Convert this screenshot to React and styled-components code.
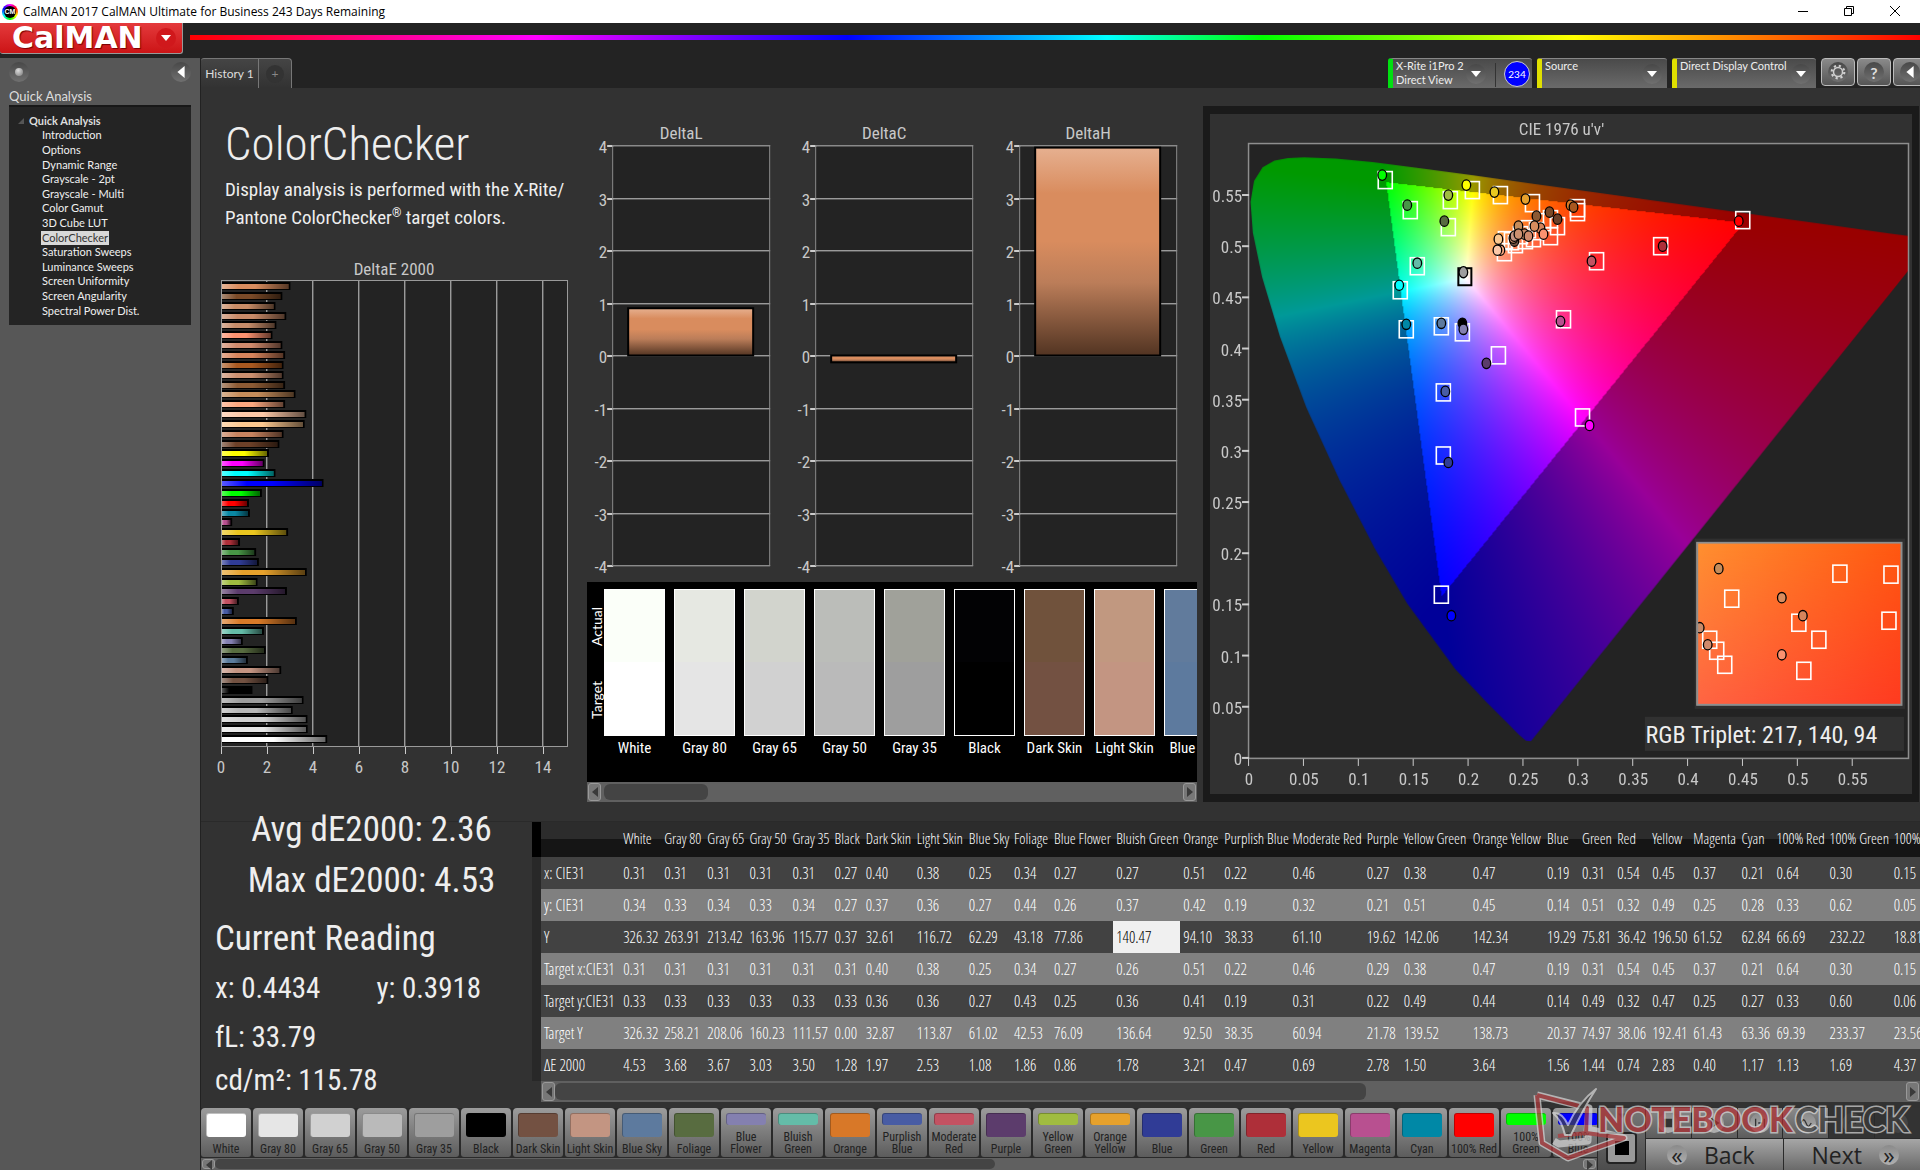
import { useEffect, useRef } from 'react';
import styled, { createGlobalStyle } from 'styled-components';

const narrow = '"Open Sans Condensed Light", "Open Sans Condensed", Lato, sans-serif';
const medium = '"Roboto Condensed", "Open Sans Condensed", Lato, sans-serif';
const ui = 'Lato, "Open Sans", sans-serif';

const pages = [
  'Introduction', 'Options', 'Dynamic Range', 'Grayscale - 2pt', 'Grayscale - Multi', 'Color Gamut',
  '3D Cube LUT', 'ColorChecker', 'Saturation Sweeps', 'Luminance Sweeps', 'Screen Uniformity',
  'Screen Angularity', 'Spectral Power Dist.',
];

// [color, dE2000] from the top of the chart down
const deltaE = [
  ['#d98c5e', 2.93], ['#7a4a28', 2.58], ['#c98c66', 2.28], ['#c88a68', 2.75], ['#c68c6a', 2.32],
  ['#fc9270', 2.15], ['#d08a6c', 2.58], ['#d6845c', 2.7], ['#a85820', 2.63], ['#cc9070', 2.63],
  ['#8c5a34', 2.7], ['#c58c5a', 3.15], ['#fca880', 2.7], ['#fcc8a8', 3.62], ['#fcc890', 3.55],
  ['#c88460', 2.63], ['#6c4028', 2.45], ['#ffff00', 2.0], ['#ff00ff', 1.8], ['#00ffff', 2.28],
  ['#0000ff', 4.37], ['#00ff00', 1.69], ['#ff0000', 1.13], ['#0a88a4', 1.17], ['#b85090', 0.4],
  ['#ebc61f', 2.83], ['#ae2f39', 0.74], ['#489646', 1.44], ['#303c96', 1.56], ['#e6a12c', 3.64],
  ['#a0bc40', 1.5], ['#5c3c6c', 2.78], ['#c35262', 0.69], ['#485ca4', 0.47], ['#d87a28', 3.21],
  ['#64bca8', 1.78], ['#8480b0', 0.86], ['#586c40', 1.86], ['#5c7c9c', 1.08], ['#c49482', 2.53],
  ['#735242', 1.97], ['#000000', 1.28], ['#9c9c9c', 3.5], ['#b8b8b8', 3.03], ['#d0d0d0', 3.67],
  ['#e6e6e6', 3.68], ['#ffffff', 4.53],
];

const swatches = [
  ['White', '#fbfff9', '#ffffff'],
  ['Gray 80', '#e6e8e2', '#e5e5e5'],
  ['Gray 65', '#d2d4cd', '#d1d1d1'],
  ['Gray 50', '#bbbdb9', '#bababa'],
  ['Gray 35', '#a0a19a', '#9e9e9e'],
  ['Black', '#020204', '#000000'],
  ['Dark Skin', '#70523c', '#735142'],
  ['Light Skin', '#c19880', '#c39582'],
  ['Blue Sky', '#617b9c', '#5d7a9e'],
];

const patches = [
  ['White', '#ffffff'], ['Gray 80', '#e6e6e6'], ['Gray 65', '#d1d1d1'], ['Gray 50', '#bababa'],
  ['Gray 35', '#9e9e9e'], ['Black', '#000000'], ['Dark Skin', '#735142'], ['Light Skin', '#c39582'],
  ['Blue Sky', '#5d7a9e'], ['Foliage', '#586c40'], ['Blue Flower', '#8480b0', 1], ['Bluish Green', '#64bca8', 1],
  ['Orange', '#d87828'], ['Purplish Blue', '#485ca4', 1], ['Moderate Red', '#c35262', 1], ['Purple', '#5c3c6c'],
  ['Yellow Green', '#a0bc40', 1], ['Orange Yellow', '#e6a12c', 1], ['Blue', '#303c96'], ['Green', '#489646'],
  ['Red', '#ae2f39'], ['Yellow', '#ebc61f'], ['Magenta', '#b85090'], ['Cyan', '#0088a6'],
  ['100% Red', '#ff0000'], ['100% Green', '#00ff00', 1], ['100% Blue', '#0000ff', 1],
];

// [name, column width, x, y, Y, target x, target y, target Y, dE]
const columns = [
  ['White', 41, '0.31', '0.34', '326.32', '0.31', '0.33', '326.32', '4.53'],
  ['Gray 80', 43, '0.31', '0.33', '263.91', '0.31', '0.33', '258.21', '3.68'],
  ['Gray 65', 42, '0.31', '0.34', '213.42', '0.31', '0.33', '208.06', '3.67'],
  ['Gray 50', 43, '0.31', '0.33', '163.96', '0.31', '0.33', '160.23', '3.03'],
  ['Gray 35', 42, '0.31', '0.34', '115.77', '0.31', '0.33', '111.57', '3.50'],
  ['Black', 31, '0.27', '0.27', '0.37', '0.31', '0.33', '0.00', '1.28'],
  ['Dark Skin', 51, '0.40', '0.37', '32.61', '0.40', '0.36', '32.87', '1.97'],
  ['Light Skin', 52, '0.38', '0.36', '116.72', '0.38', '0.36', '113.87', '2.53'],
  ['Blue Sky', 45, '0.25', '0.27', '62.29', '0.25', '0.27', '61.02', '1.08'],
  ['Foliage', 40, '0.34', '0.44', '43.18', '0.34', '0.43', '42.53', '1.86'],
  ['Blue Flower', 62, '0.27', '0.26', '77.86', '0.27', '0.25', '76.09', '0.86'],
  ['Bluish Green', 67, '0.27', '0.37', '140.47', '0.26', '0.36', '136.64', '1.78'],
  ['Orange', 41, '0.51', '0.42', '94.10', '0.51', '0.41', '92.50', '3.21'],
  ['Purplish Blue', 68, '0.22', '0.19', '38.33', '0.22', '0.19', '38.35', '0.47'],
  ['Moderate Red', 74, '0.46', '0.32', '61.10', '0.46', '0.31', '60.94', '0.69'],
  ['Purple', 37, '0.27', '0.21', '19.62', '0.29', '0.22', '21.78', '2.78'],
  ['Yellow Green', 69, '0.38', '0.51', '142.06', '0.38', '0.49', '139.52', '1.50'],
  ['Orange Yellow', 74, '0.47', '0.45', '142.34', '0.47', '0.44', '138.73', '3.64'],
  ['Blue', 35, '0.19', '0.14', '19.29', '0.19', '0.14', '20.37', '1.56'],
  ['Green', 35, '0.31', '0.51', '75.81', '0.31', '0.49', '74.97', '1.44'],
  ['Red', 35, '0.54', '0.32', '36.42', '0.54', '0.32', '38.06', '0.74'],
  ['Yellow', 41, '0.45', '0.49', '196.50', '0.45', '0.47', '192.41', '2.83'],
  ['Magenta', 48, '0.37', '0.25', '61.52', '0.37', '0.25', '61.43', '0.40'],
  ['Cyan', 35, '0.21', '0.28', '62.84', '0.21', '0.27', '63.36', '1.17'],
  ['100% Red', 53, '0.64', '0.33', '66.69', '0.64', '0.33', '69.39', '1.13'],
  ['100% Green', 64, '0.30', '0.62', '232.22', '0.30', '0.60', '233.37', '1.69'],
  ['100% Blue', 60, '0.15', '0.05', '18.81', '0.15', '0.06', '23.56', '4.37'],
];
const rowNames = ['x: CIE31', 'y: CIE31', 'Y', 'Target x:CIE31', 'Target y:CIE31', 'Target Y', 'ΔE 2000'];

// CIE 1976 spectral locus, u'v'
const locus = [
  [0.2568, 0.0165], [0.2522, 0.0169], [0.2461, 0.0226], [0.2347, 0.035], [0.2161, 0.0549], [0.1877, 0.0871],
  [0.1441, 0.151], [0.1147, 0.2044], [0.0828, 0.2708], [0.0521, 0.3427], [0.0282, 0.4117], [0.0119, 0.4698],
  [0.0035, 0.5131], [0.0014, 0.5432], [0.0046, 0.5638], [0.0123, 0.577], [0.0231, 0.5837], [0.0355, 0.5862],
  [0.0501, 0.5868], [0.0792, 0.5856], [0.1127, 0.5821], [0.1531, 0.5766], [0.2026, 0.5694], [0.2623, 0.5604],
  [0.3315, 0.5501], [0.4035, 0.5393], [0.5203, 0.5219], [0.583, 0.5125], [0.6234, 0.5065],
];

const CIE = { w: 701, h: 680, left: 39, top: 30, right: 697, bottom: 643, ux: 1096, vy: 1022 };
const px = (u) => CIE.left + u * CIE.ux;
const py = (v) => CIE.bottom - v * CIE.vy;

const targets = [
  [175, 66], [200, 96], [240, 86], [262, 76], [290, 81], [322, 89], [367, 94], [367, 98], [238, 113], [207, 152],
  [190, 176], [196, 215], [231, 212], [252, 218], [288, 241], [233, 278], [233, 341], [372, 303], [353, 205],
  [386, 147], [450, 132], [532, 106], [231, 480], [347, 112], [340, 122], [295, 126], [294, 138], [305, 130],
  [315, 126], [323, 124], [318, 115], [340, 105], [333, 108], [326, 117], [310, 121], [301, 127],
];

const readings = [
  [172, 61, '#00ff00'], [197, 91, '#489646'], [238, 81, '#a0bc40'], [256, 71, '#ffff00'], [284, 78, '#e8c820'],
  [315, 85, '#e6a12c'], [360, 91, '#d87a28'], [363, 93, '#a85820'], [234, 107, '#586c40'], [207, 149, '#64bca8'],
  [189, 171, '#00ffff'], [196, 210, '#0088a6'], [231, 209, '#5d7a9e'], [252, 209, '#000000'], [253, 215, '#8480b0'],
  [276, 249, '#5c3c6c'], [235, 277, '#485ca4'], [238, 348, '#303c96'], [379, 311, '#ff00ff'], [350, 207, '#b85090'],
  [381, 147, '#c35262'], [452, 132, '#ae2f39'], [528, 107, '#ff0000'], [241, 501, '#0000ff'], [326, 102, '#8c5a34'],
  [339, 98, '#7a4a28'], [347, 105, '#6c4028'], [308, 112, '#c58c5a'], [330, 114, '#d6845c'], [324, 112, '#d98c5e'],
  [333, 120, '#fc9270'], [314, 120, '#c88a68'], [318, 122, '#d08a6c'], [304, 127, '#735242'], [303, 124, '#c68c6a'],
  [304, 122, '#c49482'], [308, 120, '#cc9070'], [288, 125, '#fcc890'], [290, 136, '#fca880'], [287, 136, '#fcc8a8'],
];

const insetTargets = [
  [629, 459], [680, 460], [521, 484], [678, 506], [588, 508], [608, 525], [499, 525], [506, 536], [514, 550], [593, 556],
];
const insetReadings = [
  [508, 454, '#c58c5a'], [571, 483, '#d98c5e'], [592, 501, '#d6845c'], [489, 513, '#c88a68'], [497, 530, '#d08a6c'],
  [571, 540, '#fc9270'],
];

function paintGamut(canvas) {
  const ctx = canvas.getContext('2d');
  const { w, h } = CIE;
  const layer = document.createElement('canvas');
  layer.width = w;
  layer.height = h;
  const lctx = layer.getContext('2d');
  const image = lctx.createImageData(w, h);
  for (let j = 0; j < h; j += 1) {
    for (let i = 0; i < w; i += 1) {
      const u = (i + 0.5 - CIE.left) / CIE.ux;
      const v = Math.max((CIE.bottom - j - 0.5) / CIE.vy, 0.004);
      const X = (9 * u) / (4 * v);
      const Z = (12 - 3 * u - 20 * v) / (4 * v);
      const rgb = [
        3.2406 * X - 1.5372 - 0.4986 * Z,
        -0.9689 * X + 1.8758 + 0.0415 * Z,
        0.0557 * X - 0.204 + 1.057 * Z,
      ];
      const max = Math.max(...rgb);
      const dim = Math.min(...rgb) < 0 ? 0.6 : 1;
      const at = (j * w + i) * 4;
      for (let k = 0; k < 3; k += 1) {
        image.data[at + k] = 255 * dim * (Math.max(rgb[k], 0) / max);
      }
      image.data[at + 3] = 255;
    }
  }
  lctx.putImageData(image, 0, 0);
  ctx.clearRect(0, 0, w, h);
  ctx.save();
  ctx.beginPath();
  ctx.rect(CIE.left, CIE.top, CIE.right - CIE.left, CIE.bottom - CIE.top);
  ctx.clip();
  ctx.beginPath();
  locus.forEach(([u, v]) => ctx.lineTo(px(u), py(v)));
  ctx.closePath();
  ctx.clip();
  ctx.drawImage(layer, 0, 0);
  ctx.restore();
}

const Tri = ({ dir = 'down', size = 10, color = '#fff' }) => {
  const d = { down: 'M0 2h10L5 8z', left: 'M8 0v10L2 5z', right: 'M2 0v10l6-5z' }[dir];
  return (
    <svg width={size} height={size} viewBox="0 0 10 10" aria-hidden="true">
      <path d={d} fill={color} />
    </svg>
  );
};

const Scroll = ({ size, start, span, gap = 2 }) => (
  <ScrollTrack $size={size}>
    <ScrollArrow aria-label="Scroll left"><Tri dir="left" color="#3a3a3a" /></ScrollArrow>
    <ScrollLane>
      <ScrollThumb $gap={gap} style={{ marginLeft: start, width: span }} />
    </ScrollLane>
    <ScrollArrow aria-label="Scroll right"><Tri dir="right" color="#3a3a3a" /></ScrollArrow>
  </ScrollTrack>
);

const DeltaEChart = () => (
  <ChartSvg viewBox="0 0 386 530" role="img" aria-label="DeltaE 2000">
    <defs>
      <linearGradient id="shadeX" x1="0" x2="1" y1="0" y2="0">
        <stop offset="0" stopColor="#fff" stopOpacity=".35" />
        <stop offset=".25" stopColor="#fff" stopOpacity="0" />
        <stop offset=".5" stopColor="#000" stopOpacity="0" />
        <stop offset="1" stopColor="#000" stopOpacity=".6" />
      </linearGradient>
    </defs>
    <text x="193" y="19" textAnchor="middle">DeltaE 2000</text>
    <rect x="20.5" y="24.5" width="346" height="466" fill="#232323" />
    {[2, 4, 6, 8, 10, 12, 14].map((t) => (
      <g key={t}>
        <rect x={19 + t * 23} y="25" width="1" height="465" fill="#9a9a9a" />
        <rect x={20 + t * 23} y="25" width="1" height="465" fill="#555" />
      </g>
    ))}
    {deltaE.map(([color, value], i) => {
      const y = 26 + Math.round(i * 9.85);
      return (
        <g key={i}>
          <rect x="21" y={y} width={value * 23 + 1} height="8" fill="#000" />
          <rect x="21" y={y + 2} width={value * 23 - 1} height="5" fill={color} />
          <rect x="21" y={y + 2} width={value * 23 - 1} height="5" fill="url(#shadeX)" />
        </g>
      );
    })}
    <rect x="20.5" y="24.5" width="346" height="466" fill="none" stroke="#9a9a9a" />
    {[0, 2, 4, 6, 8, 10, 12, 14].map((t) => (
      <g key={t}>
        <rect x={20 + t * 23} y="491" width="1" height="7" fill="#ccc" />
        <text x={20 + t * 23} y="517" textAnchor="middle">{t}</text>
      </g>
    ))}
  </ChartSvg>
);

const DeltaChart = ({ title, value }) => {
  const zero = 244;
  const h = Math.abs(value) * 52.5;
  const top = value > 0 ? zero - h : zero;
  return (
    <DeltaSvg viewBox="0 0 203 470" role="img" aria-label={title}>
      <defs>
        <linearGradient id="copper" x1="0" x2="0" y1="0" y2="1">
          <stop offset="0" stopColor="#e6b090" />
          <stop offset=".22" stopColor="#d98c5e" />
          <stop offset=".45" stopColor="#d98c5e" />
          <stop offset=".65" stopColor="#bb7d59" />
          <stop offset="1" stopColor="#523422" />
        </linearGradient>
      </defs>
      <text x="94" y="27" textAnchor="middle">{title}</text>
      <rect x="25.5" y="33.5" width="157" height="420" fill="#232323" />
      {[4, 3, 2, 1, 0, -1, -2, -3, -4].map((t) => {
        const y = Math.round(zero - t * 52.5);
        return (
          <g key={t}>
            <rect x="25" y={y - 1} width="158" height="1" fill="#9a9a9a" />
            <rect x="25" y={y} width="158" height="1" fill="#555" />
            <rect x="20" y={y - 1} width="6" height="2" fill="#ccc" />
            <text x="20" y={y + 7} textAnchor="end">{t}</text>
          </g>
        );
      })}
      <rect x="25.5" y="33.5" width="157" height="420" fill="none" stroke="#8a8a8a" />
      <rect x="41" y={top - 0.5} width="125" height={h} fill="url(#copper)" stroke="#000" strokeWidth="2" />
    </DeltaSvg>
  );
};

const Marks = ({ squares, dots }) => (
  <>
    {squares.map(([x, y], i) => (
      <rect key={i} x={x - 7} y={y - 8.5} width="14" height="17" fill="none" stroke="#fff" strokeWidth="1.6" />
    ))}
    {dots.map(([x, y, c], i) => (
      <ellipse key={i} cx={x} cy={y} rx="4.3" ry="5.2" fill={c} stroke="#000" strokeWidth="1.3" />
    ))}
  </>
);

const CieChart = () => {
  const canvas = useRef(null);
  useEffect(() => paintGamut(canvas.current), []);
  const ticks = [0, 0.05, 0.1, 0.15, 0.2, 0.25, 0.3, 0.35, 0.4, 0.45, 0.5, 0.55];
  return (
    <CieStack>
      <canvas ref={canvas} width={CIE.w} height={CIE.h} />
      <svg viewBox={`0 0 ${CIE.w} ${CIE.h}`} role="img" aria-label="CIE 1976 u'v'">
        <defs>
          <linearGradient id="zoomTop" x1="0" x2="1" y1="0" y2="0">
            <stop offset="0" stopColor="#ff9030" />
            <stop offset="1" stopColor="#ff5810" />
          </linearGradient>
          <linearGradient id="zoomBottom" x1="0" x2="1" y1="0" y2="0">
            <stop offset="0" stopColor="#ff6444" />
            <stop offset="1" stopColor="#ff3a20" />
          </linearGradient>
          <linearGradient id="fadeDown" x1="0" x2="0" y1="0" y2="1">
            <stop offset="0" stopColor="#000" />
            <stop offset="1" stopColor="#fff" />
          </linearGradient>
          <mask id="lower"><rect x="486" y="429" width="205" height="163" fill="url(#fadeDown)" /></mask>
          <clipPath id="zoomClip"><rect x="486" y="429" width="204" height="161" /></clipPath>
        </defs>
        <text x="351" y="21" textAnchor="middle">CIE 1976 u'v'</text>
        <rect x="38.5" y="29.5" width="659" height="614" fill="none" stroke="#8e8e8e" strokeWidth="1.5" />
        {ticks.map((t) => (
          <g key={t}>
            <rect x="32" y={py(t) - 1} width="7" height="2" fill="#ccc" />
            <text x="32" y={py(t) + 7} textAnchor="end">{t}</text>
            <rect x={px(t) - 1} y="644" width="1" height="7" fill="#ccc" />
            <text x={px(t)} y="670" textAnchor="middle">{t}</text>
          </g>
        ))}
        <Marks squares={targets} dots={readings} />
        <rect x="248" y="154" width="13" height="17" fill="none" stroke="#000" strokeWidth="2" />
        <ellipse cx="253" cy="158" rx="4.3" ry="5.5" fill="#9e9e9e" stroke="#000" strokeWidth="1.3" />
        <rect x="484" y="424" width="210" height="170" fill="#2f2f2f" />
        <rect x="486" y="428" width="204" height="162" fill="url(#zoomTop)" />
        <rect x="486" y="428" width="204" height="162" fill="url(#zoomBottom)" mask="url(#lower)" />
        <g clipPath="url(#zoomClip)">
          <Marks squares={insetTargets} dots={insetReadings} />
        </g>
        <rect x="486.5" y="428" width="204" height="162" fill="none" stroke="#8e8e8e" strokeWidth="2" />
        <rect x="434" y="602" width="259" height="34" fill="#313131" />
        <Triplet x="435" y="628">RGB Triplet: 217, 140, 94</Triplet>
      </svg>
    </CieStack>
  );
};

const Watermark = () => (
  <WatermarkSvg viewBox="0 0 390 76" role="img" aria-label="NOTEBOOKCHECK">
    <g strokeLinejoin="round" fill="none">
      <path d="M7 9l52 13-1 33-29 3-5-3M7 9l5 48 26 15 56-20-36-9M59 22l-2 24" stroke="#d8d8d8" strokeWidth="7" />
      <path d="M7 9l50 13-1 26M7 9l5 48 26 15 56-20-38-5-28 3" stroke="#b33a3d" strokeWidth="4" />
      <path d="M23 27c7-1 12 5 15 12C45 24 54 12 66 3 56 18 48 34 41 49h-6c-2-9-6-17-12-22z" fill="#444" stroke="#d8d8d8" strokeWidth="2" />
    </g>
    <WatermarkText x="68" y="46" $color="#b02c30" $weight="900">NOTEBOOK</WatermarkText>
    <WatermarkText x="265" y="46" $color="#3a3a3a" $weight="700">CHECK</WatermarkText>
  </WatermarkSvg>
);

const App = () => {
  return (
    <>
      <GlobalStyle />
      <Window>
        <TitleBar>
          <AppIcon><span>CM</span></AppIcon>
          <WindowTitle>CalMAN 2017 CalMAN Ultimate for Business 243 Days Remaining</WindowTitle>
          <WindowButton aria-label="Minimize">
            <svg width="10" height="10" viewBox="0 0 10 10"><path d="M0 5.5h10" /></svg>
          </WindowButton>
          <WindowButton aria-label="Restore">
            <svg width="10" height="10" viewBox="0 0 10 10"><path d="M.5 2.5h7v7h-7zM2.5 2.5v-2h7v7h-2" /></svg>
          </WindowButton>
          <WindowButton aria-label="Close">
            <svg width="10" height="10" viewBox="0 0 10 10"><path d="M0 0l10 10M10 0L0 10" /></svg>
          </WindowButton>
        </TitleBar>
        <Header>
          <Brand>
            <BrandName>CalMAN</BrandName>
            <BrandArrow><Tri /></BrandArrow>
          </Brand>
          <Rainbow />
        </Header>
        <Body>
          <Sidebar>
            <SidebarTop>
              <Knob aria-label="Pin"><Dot /></Knob>
              <Knob aria-label="Collapse"><Tri dir="left" size={12} /></Knob>
            </SidebarTop>
            <SidebarTitle>Quick Analysis</SidebarTitle>
            <Tree>
              <TreeRoot><svg width="6" height="6" viewBox="0 0 6 6"><path d="M6 0v6H0z" fill="#555" /></svg>Quick Analysis</TreeRoot>
              <TreeList>
                {pages.map((page) => (
                  <TreeItem key={page}><TreeLink href="#" $active={page === 'ColorChecker'}>{page}</TreeLink></TreeItem>
                ))}
              </TreeList>
            </Tree>
          </Sidebar>
          <Workspace>
            <TabRow>
              <Tab>History 1</Tab>
              <AddTab aria-label="Add tab"><span>+</span></AddTab>
              <Spacer />
              <Device $color="#00e010" $width="144px">
                <DeviceName>X-Rite i1Pro 2<br />Direct View</DeviceName>
                <Knob as="span"><Tri /></Knob>
                <Divider />
                <Counter>234</Counter>
              </Device>
              <Device $color="#e0e000" $width="130px">
                <DeviceName>Source</DeviceName>
                <Knob as="span"><Tri /></Knob>
              </Device>
              <Device $color="#e0e000" $width="144px">
                <DeviceName>Direct Display Control</DeviceName>
                <Knob as="span"><Tri /></Knob>
              </Device>
              <Tool aria-label="Settings">
                <Knob as="span">
                  <svg width="16" height="16" viewBox="0 0 16 16" fill="none" stroke="#d0d0d0">
                    <circle cx="8" cy="8" r="4.5" strokeWidth="1.5" />
                    <circle cx="8" cy="8" r="6.3" strokeWidth="2.2" strokeDasharray="2.2 2.75" />
                  </svg>
                </Knob>
              </Tool>
              <Tool aria-label="Help"><Knob as="span">?</Knob></Tool>
              <Tool aria-label="Hide"><Knob as="span"><Tri dir="left" size={12} /></Knob></Tool>
            </TabRow>
            <Stage>
              <LeftColumn>
                <Intro>
                  <h1>ColorChecker</h1>
                  <p>Display analysis is performed with the X-Rite/<br />Pantone ColorChecker<sup>®</sup> target colors.</p>
                </Intro>
                <DeltaEChart />
              </LeftColumn>
              <MiddleColumn>
                <DeltaRow>
                  <DeltaChart title="DeltaL" value={0.9} />
                  <DeltaChart title="DeltaC" value={-0.13} />
                  <DeltaChart title="DeltaH" value={3.96} />
                </DeltaRow>
                <SwatchPanel>
                  <SideLabels>
                    <span>Actual</span>
                    <span>Target</span>
                  </SideLabels>
                  {swatches.map(([name, actual, target]) => (
                    <Swatch key={name}>
                      <SwatchColor $actual={actual} $target={target} />
                      <SwatchName>{name}</SwatchName>
                    </Swatch>
                  ))}
                </SwatchPanel>
                <Scroll size={20} start="3px" span="104px" />
              </MiddleColumn>
              <CiePanel>
                <CieChart />
              </CiePanel>
            </Stage>
            <Lower>
              <Stats>
                <Average>Avg dE2000: 2.36</Average>
                <Average>Max dE2000: 4.53</Average>
                <Reading>Current Reading</Reading>
                <Values><span>x: 0.4434</span><span>y: 0.3918</span></Values>
                <Values>fL: 33.79</Values>
                <Values $tight>cd/m²: 115.78</Values>
              </Stats>
              <TableArea>
                <TableClip>
                  <Table>
                    <colgroup>
                      <col width="9" />
                      <col width="79" />
                      {columns.map(([name, width]) => <col key={name} width={width} />)}
                    </colgroup>
                    <thead>
                      <tr>
                        <Grip as="th" $head />
                        <th />
                        {columns.map(([name]) => <th key={name} scope="col">{name}</th>)}
                      </tr>
                    </thead>
                    <tbody>
                      {rowNames.map((row, r) => (
                        <tr key={row}>
                          <Grip />
                          <th scope="row">{row}</th>
                          {columns.map((c) => (
                            <Cell key={c[0]} $active={r === 2 && c[0] === 'Bluish Green'}>{c[r + 2]}</Cell>
                          ))}
                        </tr>
                      ))}
                    </tbody>
                  </Table>
                </TableClip>
                <TableScroll><Scroll size={21} start="0" span="60%" gap={2} /></TableScroll>
              </TableArea>
            </Lower>
            <BottomBar>
              <PatchArea>
                <PatchRow>
                  {patches.map(([name, color, tall]) => (
                    <Patch key={name}>
                      <PatchColor $color={color} $short={tall} />
                      <PatchName $tall={tall}>{name}</PatchName>
                    </Patch>
                  ))}
                </PatchRow>
                <Scroll size={12} start="0" span="57%" gap={1} />
              </PatchArea>
              <StopArea>
                <StopTop><Tri dir="down" size={8} color="#555" /></StopTop>
                <StopButton aria-label="Stop"><StopSquare /></StopButton>
              </StopArea>
              <NavArea>
                <Transport>
                  {['M4 4h8v8H4z', 'M5 3l8 5-8 5z', 'M3 3v10M13 3v10M6 8h4', 'M2 8c3-5 4-5 6 0s3 5 6 0', 'M4 9c1-6 7-6 8 0M12 9v-4', 'M8 3v10'].map((d, i) => (
                    <TransportButton key={d} aria-label={`Transport ${i + 1}`} $off={i > 3}>
                      <Disc $off={i > 3}>
                        <svg width="14" height="14" viewBox="0 0 16 16"><path d={d} fill={i < 2 ? '#333' : 'none'} stroke="#333" strokeWidth="1.5" /></svg>
                      </Disc>
                    </TransportButton>
                  ))}
                </Transport>
                <NavButtons>
                  <NavButton><Disc>«</Disc>Back</NavButton>
                  <NavButton $next>Next<Disc>»</Disc></NavButton>
                </NavButtons>
              </NavArea>
            </BottomBar>
          </Workspace>
        </Body>
        <Watermark />
      </Window>
    </>
  );
};

export default App;

const GlobalStyle = createGlobalStyle`
  * {
    box-sizing: border-box;
  }
  body {
    margin: 0;
    background: #323232;
    color: #ddd;
    font-family: ${ui};
    font-size: 12px;
    overflow: hidden;
  }
  button {
    font: inherit;
    color: inherit;
    border: 0;
    padding: 0;
    background: none;
  }
  svg text {
    font: 17px ${medium};
    fill: #c8c8c8;
  }
`;

const Window = styled.div`
  display: flex;
  flex-direction: column;
  min-height: 100vh;
  position: relative;
`;

const TitleBar = styled.div`
  display: flex;
  align-items: center;
  height: 23px;
  padding: 0 2px;
  background: #fff;
  color: #000;
`;

const AppIcon = styled.div`
  width: 16px;
  height: 16px;
  display: grid;
  place-items: center;
  border-radius: 50%;
  background: conic-gradient(#f0f, #f00, #ff0, #0f0, #0ff, #00f, #f0f);
  span {
    width: 12px;
    height: 12px;
    border-radius: 50%;
    background: #000;
    color: #fff;
    font: bold 7px/12px "Liberation Sans", sans-serif;
    text-align: center;
  }
`;

const WindowTitle = styled.span`
  flex: 1;
  margin-left: 5px;
  font: 12px "Open Sans", sans-serif;
`;

const WindowButton = styled.button`
  width: 46px;
  height: 20px;
  svg {
    fill: none;
    stroke: #000;
  }
`;

const Header = styled.header`
  display: flex;
  align-items: flex-start;
  height: 35px;
  background: #232323;
`;

const Brand = styled.button`
  display: flex;
  align-items: center;
  justify-content: space-between;
  width: 183px;
  height: 31px;
  padding: 0 6px 0 12px;
  background: linear-gradient(#e43a3c, #cc1416);
  border: solid #999;
  border-width: 0 1px 1px 0;
  border-radius: 0 0 3px 3px;
`;

const BrandName = styled.span`
  color: #fff;
  font: bold 30px/30px "DejaVu Sans", sans-serif;
  text-shadow: 1px 1px 1px #700;
`;

const BrandArrow = styled.span`
  display: grid;
  place-items: center;
  width: 20px;
  height: 20px;
  border-radius: 50%;
  background: #d0181c;
`;

const Rainbow = styled.div`
  flex: 1;
  height: 5px;
  margin: 12px 0 0 7px;
  background: linear-gradient(to right, #f00, #f0f 20%, #00f 38%, #0ff 53%, #0f0 62%, #ff0 80%, #f00);
`;

const Body = styled.div`
  display: flex;
  flex: 1;
`;

const Sidebar = styled.aside`
  width: 200px;
  padding: 0 9px;
  background: #575757;
`;

const SidebarTop = styled.div`
  display: flex;
  justify-content: space-between;
  padding-top: 4px;
`;

const Knob = styled.button`
  display: grid;
  place-items: center;
  flex: none;
  width: 20px;
  height: 20px;
  border-radius: 50%;
  background: linear-gradient(#484848, #707070);
`;

const Dot = styled.i`
  width: 8px;
  height: 8px;
  border-radius: 50%;
  background: radial-gradient(at 40% 30%, #ddd, #777);
`;

const SidebarTitle = styled.div`
  margin-top: 5px;
  font-size: 13px;
  line-height: 18px;
`;

const Tree = styled.nav`
  padding: 6px 0 7px;
  background: #242424;
  border-top: 2px solid #181818;
`;

const TreeRoot = styled.div`
  display: flex;
  align-items: center;
  gap: 5px;
  padding-left: 9px;
  line-height: 15px;
  font-weight: bold;
  font-size: 11px;
`;

const TreeList = styled.ul`
  display: grid;
  grid-auto-rows: 1fr;
  height: 190px;
  margin: 0;
  padding: 0 0 0 32px;
  list-style: none;
`;

const TreeItem = styled.li`
  display: flex;
  align-items: center;
`;

const TreeLink = styled.a`
  padding: 0 1px;
  font-size: 11px;
  line-height: 14px;
  text-decoration: none;
  color: ${({ $active }) => ($active ? '#333' : '#f0f0f0')};
  background: ${({ $active }) => ($active ? '#d8d8d8' : 'none')};
`;

const Workspace = styled.main`
  display: flex;
  flex: 1;
  flex-direction: column;
  min-width: 0;
  border-left: 1px solid #222;
`;

const TabRow = styled.div`
  display: flex;
  align-items: flex-start;
  height: 30px;
  background: #232323;
  overflow: hidden;
`;

const Tab = styled.button`
  height: 30px;
  width: 58px;
  background: linear-gradient(#454545, #323232);
  border: solid #777;
  border-width: 1px 1px 0 0;
  border-radius: 3px 0 0 0;
`;

const AddTab = styled(Tab)`
  width: 33px;
  border-radius: 0 4px 0 0;
  color: #888;
  span {
    display: block;
    width: 18px;
    height: 18px;
    margin: auto;
    border-radius: 50%;
    line-height: 18px;
    background: #333;
  }
`;

const Spacer = styled.div`
  flex: 1;
`;

const Device = styled.button`
  display: flex;
  align-items: flex-start;
  width: ${({ $width }) => $width};
  height: 30px;
  margin-right: 5px;
  padding: 4px 5px 0 3px;
  border-left: 5px solid ${({ $color }) => $color};
  border-top: 1px solid #888;
  border-radius: 3px 3px 0 0;
  background: linear-gradient(#4a4a4a, #6a6a6a);
  ${Knob} {
    margin-top: 1px;
  }
`;

const DeviceName = styled.span`
  flex: 1;
  margin-top: -4px;
  font-size: 11px;
  line-height: 14px;
  white-space: nowrap;
  text-align: left;
  color: #eee;
`;

const Divider = styled.i`
  width: 1px;
  height: 24px;
  margin: 0 8px 0 9px;
  background: #333;
`;

const Counter = styled.span`
  width: 26px;
  height: 26px;
  margin: -2px -3px 0 0;
  border: 1px solid #ccc;
  border-radius: 50%;
  background: #00f;
  color: #fff;
  font-size: 10px;
  line-height: 24px;
`;

const Tool = styled.button`
  display: grid;
  place-items: center;
  flex: none;
  width: 34px;
  height: 28px;
  margin: 0 2px 0 0;
  border: 1px solid #bbb;
  border-radius: 4px;
  background: linear-gradient(#8a8a8a, #555);
  color: #ddd;
  font-weight: bold;
  font-size: 16px;
  &:last-child {
    margin-right: -7px;
  }
`;

const Stage = styled.section`
  display: grid;
  grid-template-columns: 386fr 610fr 722fr;
  height: 733px;
  padding-right: 1px;
  background: #323232;
`;

const LeftColumn = styled.div`
  min-width: 0;
`;

const Intro = styled.div`
  height: 168px;
  padding: 28px 0 0 24px;
  color: #eee;
  white-space: nowrap;
  h1 {
    margin: 0;
    font: 300 47px/56px ${medium};
  }
  p {
    margin: 4px 0 0;
    font: 19px/28px ${medium};
  }
  sup {
    font-size: 12px;
    line-height: 0;
  }
`;

const ChartSvg = styled.svg`
  display: block;
  width: 100%;
`;

const MiddleColumn = styled.div`
  min-width: 0;
  padding-top: 24px;
`;

const DeltaRow = styled.div`
  display: grid;
  grid-template-columns: repeat(3, 1fr);
  height: 470px;
`;

const DeltaSvg = styled.svg`
  display: block;
  width: 100%;
  height: 470px;
`;

const SwatchPanel = styled.div`
  display: flex;
  gap: 9px;
  height: 200px;
  padding: 7px 0 0 2px;
  background: #000;
  overflow: hidden;
`;

const SideLabels = styled.div`
  display: grid;
  grid-template-rows: 1fr 1fr;
  width: 15px;
  height: 148px;
  margin-right: -9px;
  flex: none;
  span {
    writing-mode: vertical-rl;
    transform: rotate(180deg);
    text-align: center;
    font-size: 14px;
    line-height: 15px;
    color: #fff;
  }
`;

const Swatch = styled.div`
  flex: none;
  width: 61px;
`;

const SwatchColor = styled.div`
  height: 147px;
  border: 1px solid #fff;
  background: linear-gradient(${({ $actual, $target }) => `${$actual} 50%, ${$target} 50%`});
`;

const SwatchName = styled.div`
  margin: 3px -4px 0;
  text-align: center;
  color: #fff;
  font: 15px/18px ${medium};
`;

const ScrollTrack = styled.div`
  display: flex;
  align-items: stretch;
  height: ${({ $size }) => $size}px;
  padding: 1px;
  background: #606060;
`;

const ScrollArrow = styled.button`
  display: grid;
  place-items: center;
  flex: none;
  width: 13px;
  border: 1px solid #999;
  border-radius: 3px;
  background: #777;
`;

const ScrollLane = styled.div`
  flex: 1;
  display: flex;
`;

const ScrollThumb = styled.div`
  margin: ${({ $gap }) => $gap - 1}px 3px;
  border-radius: 6px;
  background: #444;
`;

const CiePanel = styled.div`
  height: 696px;
  margin: 18px 0 0 6px;
  padding: 8px 7px;
  background: #1a1a1a;
`;

const CieStack = styled.div`
  display: grid;
  height: 100%;
  background: linear-gradient(#232323, #232323) 39px 30px / calc(100% - 43px) calc(100% - 67px) no-repeat #313131;
  canvas,
  svg {
    grid-area: 1 / 1;
    display: block;
    width: 100%;
    height: 100%;
  }
`;

const Triplet = styled.text`
  && {
    font-size: 24px;
    fill: #eee;
  }
`;

const Lower = styled.section`
  display: flex;
  flex: 1;
  background: #323232;
  border-top: 1px solid #2a2a2a;
`;

const Stats = styled.div`
  width: 331px;
  padding-left: 14px;
  color: #eee;
  font-family: ${medium};
`;

const Average = styled.div`
  margin-right: 4px;
  text-align: center;
  font-size: 35px;
  line-height: 51px;
  &:first-child {
    margin-top: -18px;
  }
`;

const Reading = styled.div`
  margin-top: 10px;
  font-size: 35px;
  line-height: 46px;
`;

const Values = styled.div`
  display: flex;
  gap: 56px;
  margin-top: ${({ $tight }) => ($tight ? -2 : 4)}px;
  font-size: 29px;
  line-height: 45px;
`;

const TableArea = styled.div`
  flex: 1;
  min-width: 0;
`;

const TableClip = styled.div`
  overflow: hidden;
`;

const Table = styled.table`
  width: 1419px;
  table-layout: fixed;
  border-collapse: collapse;
  font: 300 16px ${narrow};
  th,
  td {
    padding: 0 0 0 3px;
    text-align: left;
    font-weight: 300;
    white-space: nowrap;
    color: #fff;
  }
  thead tr {
    height: 35px;
    background: linear-gradient(#2c2c2c 50%, #151515 50%);
  }
  thead th {
    padding-bottom: 4px;
    font-size: 15px;
  }
  tbody tr {
    height: 32px;
    background: #424242;
  }
  tbody tr:nth-child(even) {
    background: #808080;
  }
`;

const Grip = styled.td`
  background: ${({ $head }) => ($head ? '#000' : '#282828')};
`;

const Cell = styled.td`
  && {
    color: ${({ $active }) => ($active ? '#000' : '#fff')};
    background: ${({ $active }) => ($active ? '#f0f0f0' : 'none')};
  }
`;

const TableScroll = styled.div`
  padding-left: 9px;
`;

const BottomBar = styled.footer`
  display: flex;
  height: 62px;
  background: #2a2a2a;
`;

const PatchArea = styled.div`
  flex: 1;
  min-width: 0;
`;

const PatchRow = styled.div`
  display: flex;
  gap: 2px;
  height: 50px;
  overflow: hidden;
`;

const Patch = styled.button`
  display: flex;
  flex: none;
  flex-direction: column;
  align-items: center;
  justify-content: space-between;
  width: 50px;
  height: 49px;
  padding: 5px 0 2px;
  border-radius: 4px 4px 3px 3px;
  background: linear-gradient(#9c9c9c, #5c5c5c);
  color: #222;
`;

const PatchColor = styled.span`
  width: 40px;
  height: ${({ $short }) => ($short ? 12 : 24)}px;
  border: solid rgba(0, 0, 0, 0.25);
  border-width: 1px 0 0 1px;
  border-radius: 3px;
  background: ${({ $color }) => $color};
`;

const PatchName = styled.span`
  width: ${({ $tall }) => ($tall ? '46px' : 'auto')};
  font: 12px/12px ${medium};
`;

const StopArea = styled.div`
  display: flex;
  flex-direction: column;
  align-items: center;
  width: 47px;
  margin: 0 1px;
  background: linear-gradient(#777, #4c4c4c);
`;

const StopTop = styled.div`
  height: 24px;
`;

const StopButton = styled.button`
  display: grid;
  place-items: center;
  width: 31px;
  height: 32px;
  border: 2px solid #222;
  border-radius: 4px;
  background: #999;
`;

const StopSquare = styled.i`
  width: 14px;
  height: 14px;
  background: #000;
`;

const NavArea = styled.div`
  width: 274px;
`;

const Transport = styled.div`
  display: grid;
  grid-template-columns: repeat(6, 1fr);
  gap: 1px;
  height: 30px;
`;

const TransportButton = styled.button`
  display: grid;
  place-items: center;
  background: ${({ $off }) => ($off ? '#333' : 'linear-gradient(#8a8a8a, #5c5c5c)')};
`;

const NavButtons = styled.div`
  display: grid;
  grid-template-columns: 1fr 1fr;
  gap: 1px;
  height: 31px;
  margin-top: 1px;
`;

const NavButton = styled.button`
  display: flex;
  align-items: center;
  justify-content: center;
  gap: 17px;
  padding: ${({ $next }) => ($next ? '0 0 3px 7px' : '0 7px 3px 0')};
  background: linear-gradient(#a6a6a6, #626262);
  color: #222;
  font: 23px "Open Sans", sans-serif;
`;

const Disc = styled.span`
  display: grid;
  place-items: center;
  width: 20px;
  height: 20px;
  border-radius: 50%;
  background: ${({ $off }) => ($off ? '#444' : 'linear-gradient(#8a8a8a, #b0b0b0)')};
  line-height: 18px;
`;

const WatermarkSvg = styled.svg`
  position: absolute;
  right: 0;
  bottom: 8px;
  width: 390px;
  height: 76px;
  opacity: 0.7;
  pointer-events: none;
`;

const WatermarkText = styled.text`
  && {
    font: ${({ $weight }) => $weight} 34px Lato, sans-serif;
    fill: ${({ $color }) => $color};
    stroke: #d8d8d8;
    stroke-width: 3px;
    paint-order: stroke;
  }
`;
